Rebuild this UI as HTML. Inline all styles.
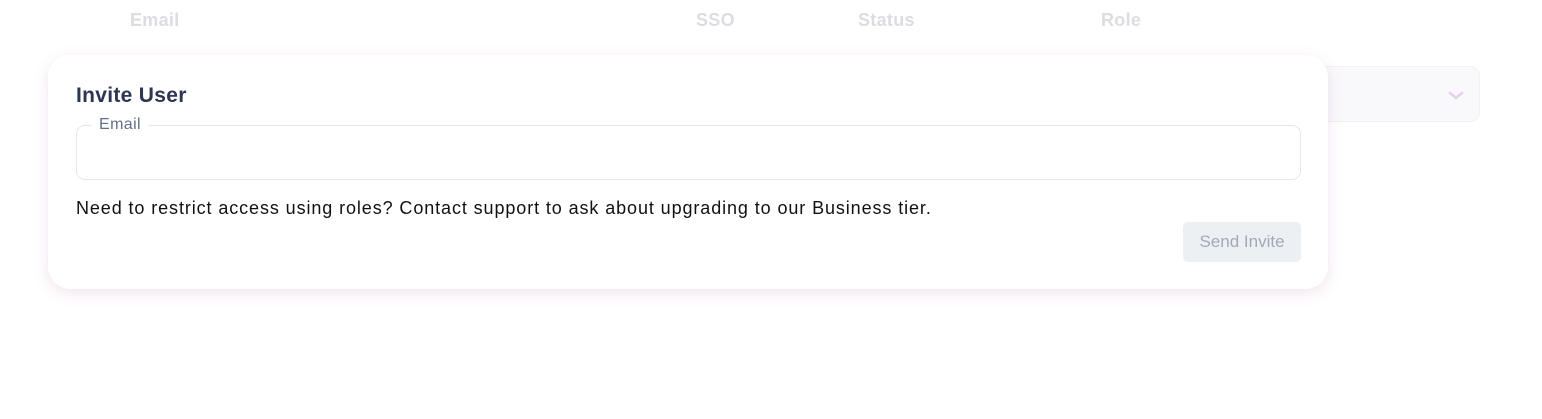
<!DOCTYPE html>
<html><head><style>
body{margin:0;width:1542px;height:419px;background:#fff;font-family:"Liberation Sans",sans-serif;position:relative;overflow:hidden}
.h{position:absolute;top:10px;font-size:18px;font-weight:bold;color:#dcdde3;letter-spacing:0.3px}
.sel{position:absolute;left:1290px;top:66px;width:188px;height:54px;background:#f9f9fb;border:1px solid #f1f1f5;border-radius:10px}
.card{position:absolute;left:48px;top:55px;width:1280px;height:234px;background:#fff;border-radius:22px;box-shadow:0 4px 14px rgba(200,150,190,0.25)}
.t{position:absolute;left:28px;top:29px;font-size:21px;font-weight:bold;color:#2d3652;letter-spacing:0.3px}
.in{position:absolute;left:28px;top:70px;width:1223px;height:53px;border:1px solid #e5e7eb;border-radius:9px}
.lg{position:absolute;left:14px;top:-10px;background:#fff;padding:0 8px;font-size:16px;color:#64708a;letter-spacing:0.4px}
.p{position:absolute;left:28px;top:143px;font-size:18px;color:#111;letter-spacing:0.9px}
.b{position:absolute;left:1135px;top:167px;width:118px;height:40px;background:#edf0f3;border-radius:5px;color:#a2a9ba;font-size:17px;text-align:center;line-height:40px}
</style></head><body>
<div class="h" style="left:130px">Email</div>
<div class="h" style="left:696px">SSO</div>
<div class="h" style="left:858px">Status</div>
<div class="h" style="left:1101px">Role</div>
<div class="sel"><svg style="position:absolute;left:157px;top:24px" width="16" height="10" viewBox="0 0 16 10"><path d="M2 2l6 5 6-5" fill="none" stroke="#e6d0ee" stroke-width="2.5" stroke-linecap="round"/></svg></div>
<div class="card">
<div class="t">Invite User</div>
<div class="in"><span class="lg">Email</span></div>
<div class="p">Need to restrict access using roles? Contact support to ask about upgrading to our Business tier.</div>
<div class="b">Send Invite</div>
</div>
</body></html>
